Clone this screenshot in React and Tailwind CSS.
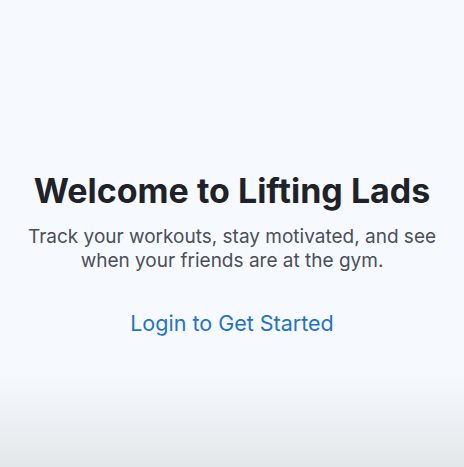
export default function App() {
  return (
    <div className="min-h-[467px] w-full bg-[#f6faff] font-['Inter',sans-serif] flex flex-col">
      <div className="flex flex-col items-center pt-[170px] px-5 text-center">
        <h1 className="text-[34px] font-bold text-[#1f2228] leading-[41px]">Welcome to Lifting Lads</h1>
        <p className="mt-[14px] text-[19px] leading-[24px] text-[#4a4f57]">
          Track your workouts, stay motivated, and see when your friends are at the gym.
        </p>
        <a href="#" className="mt-[36px] text-[21.5px] leading-[28px] text-[#1f73c9]">Login to Get Started</a>
      </div>
      <div className="flex-1" />
      <div className="h-[95px] bg-gradient-to-b from-[#f6faff] to-[#e3e7ea]" />
    </div>
  );
}
